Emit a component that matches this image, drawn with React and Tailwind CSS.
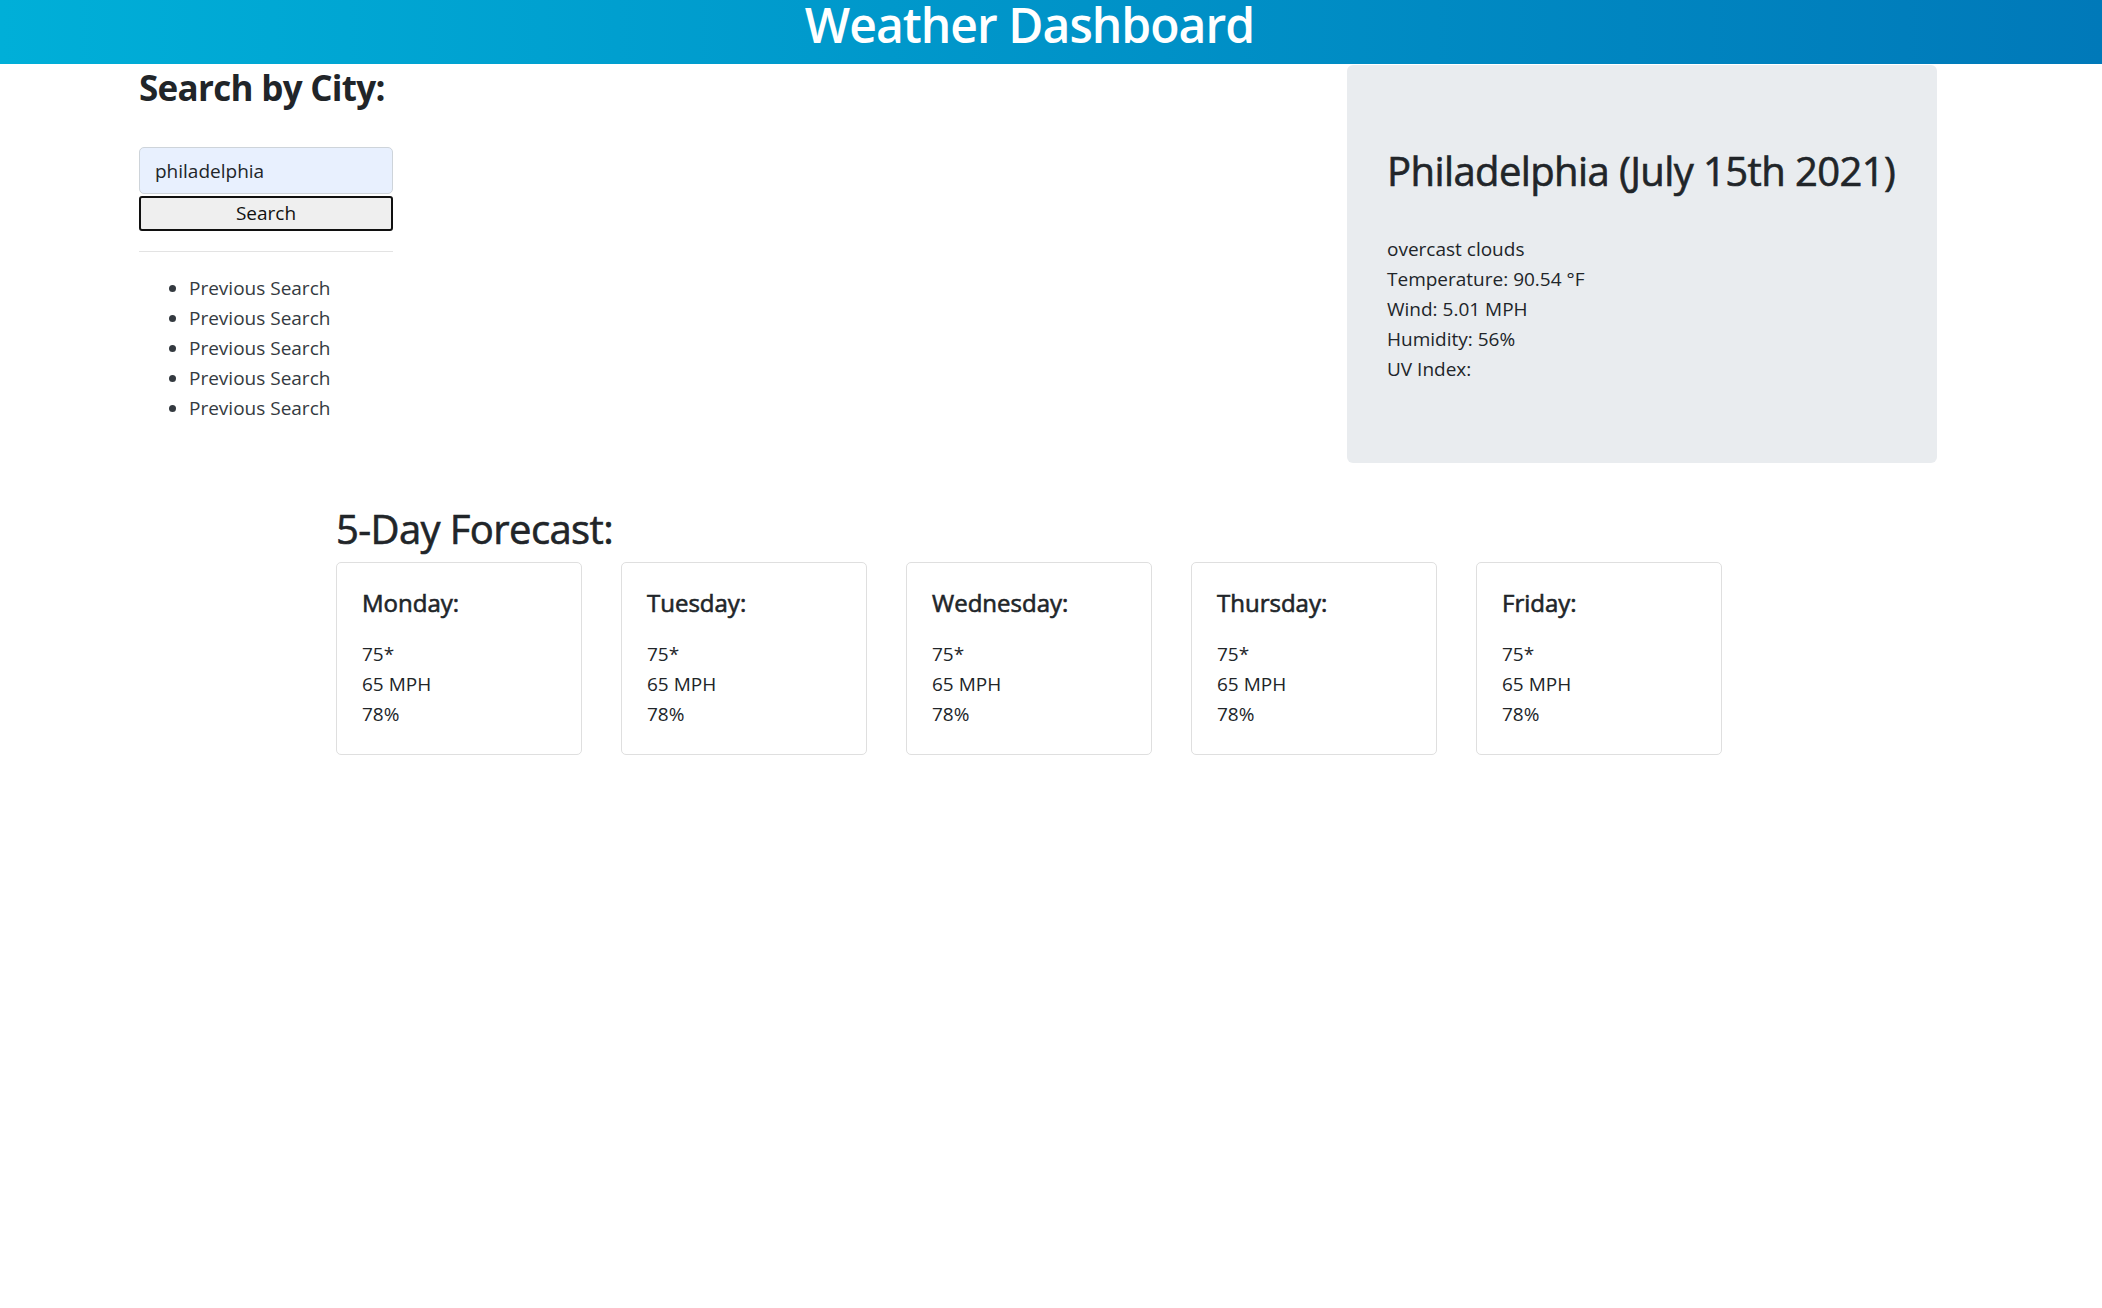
const DAYS = ["Monday", "Tuesday", "Wednesday", "Thursday", "Friday"];

const HISTORY = [
  "Previous Search",
  "Previous Search",
  "Previous Search",
  "Previous Search",
  "Previous Search",
];

// Open Sans has no 500 weight here, so headings get a thin stroke to look "medium"
const MEDIUM = "font-normal [-webkit-text-stroke:0.6px_#212529]";

function ForecastCard({ day }) {
  return (
    <div className="w-[246px] h-[193px] border border-[#dfdfdf] rounded-[5px] bg-white px-[25px] pt-[25px]">
      <h5 className={`text-[24px] leading-[30px] mb-[21px] ${MEDIUM}`}>{day}:</h5>
      <p className="leading-[30px]">75*</p>
      <p className="leading-[30px]">65 MPH</p>
      <p className="leading-[30px]">78%</p>
    </div>
  );
}

export default function App() {
  return (
    <div
      className="min-h-screen bg-white text-[#212529] text-[19px] leading-[30px]"
      style={{ fontFamily: '"Open Sans", "Noto Sans", sans-serif' }}
    >
      {/* Header */}
      <header className="h-[64px] pr-[43px] bg-gradient-to-r from-[#00afd8] to-[#0079b9]">
        <h1 className="text-center text-white text-[48px] leading-[50px] font-semibold tracking-[-0.02em]">
          Weather Dashboard
        </h1>
      </header>

      <div className="flex items-start">
        {/* Search column */}
        <aside className="ml-[139px] w-[254px] pt-[3px]">
          <h3 className="text-[35px] leading-[42px] font-bold tracking-[-0.02em]">Search by City:</h3>
          <div className="mt-[38px] flex flex-col">
            <input
              className="h-[47px] w-full border border-[#ced4da] rounded-[5px] bg-[#e8f0fe] px-[15px] text-[19px] text-[#212529] outline-none"
              defaultValue="philadelphia"
            />
            <button className="mt-[2px] h-[35px] w-full border-2 border-[#101010] rounded-[3px] bg-[#efefef] text-[19px] leading-none text-[#111]">
              Search
            </button>
          </div>
          <hr className="mt-[20px] border-0 border-t border-[#e3e3e3]" />
          <ul className="mt-[21px] list-disc pl-[50px] text-[#343a40]">
            {HISTORY.map((item, i) => (
              <li key={i} className="leading-[30px]">
                {item}
              </li>
            ))}
          </ul>
        </aside>

        {/* Current weather */}
        <section className="ml-auto mr-[165px] mt-[1px] w-[590px] h-[398px] bg-[#e9ecef] rounded-[6px] px-[40px] pt-[82px]">
          <h2 className={`text-[40px] leading-[48px] tracking-[-0.015em] whitespace-nowrap ${MEDIUM}`}>
            Philadelphia (July 15th 2021)
          </h2>
          <div className="mt-[39px]">
            <p>overcast clouds</p>
            <p>Temperature: 90.54 °F</p>
            <p>Wind: 5.01 MPH</p>
            <p>Humidity: 56%</p>
            <p>UV Index:</p>
          </div>
        </section>
      </div>

      {/* 5-day forecast */}
      <section className="pl-[336px] mt-[42px]">
        <h2 className={`text-[40px] leading-[48px] tracking-[-0.015em] mb-[9px] ${MEDIUM}`}>5-Day Forecast:</h2>
        <div className="flex gap-[39px]">
          {DAYS.map((d) => (
            <ForecastCard key={d} day={d} />
          ))}
        </div>
      </section>
    </div>
  );
}
